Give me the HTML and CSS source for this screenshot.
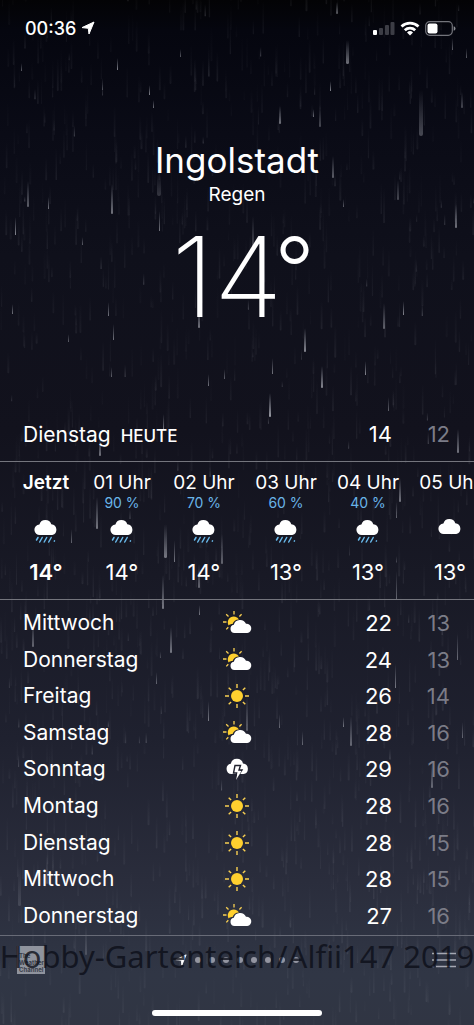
FILE: index.html
```html
<!DOCTYPE html>
<html lang="de">
<head>
<meta charset="utf-8">
<meta name="viewport" content="width=device-width, initial-scale=1">
<title>Wetter – Ingolstadt</title>
<link rel="stylesheet" href="styles.css">
</head>
<body>
<svg class="defs" aria-hidden="true">
  <symbol id="rain" viewBox="0 0 24 26">
    <path fill="#fff" d="M6 17a5.300 5.300 0 0 1-.6-10.600A6.300 6.300 0 0 1 17.300 6.200A5.500 5.500 0 0 1 18.300 17Z"/>
    <path stroke="#69b9ea" stroke-width="1.500" stroke-linecap="round" fill="none" d="M4 19.500l-1.500 2.500M8.200 19.500l-2.500 4.500M12.700 19.500l-2.500 4.500M17.200 19.500l-2.500 4.500M20.500 22.800l-.2.300"/>
  </symbol>
  <symbol id="cloud" viewBox="0 0 24 26">
    <path fill="#fff" d="M6 16a5.300 5.300 0 0 1-.6-10.600A6.300 6.300 0 0 1 17.300 5.200A5.500 5.500 0 0 1 18.300 16Z"/>
  </symbol>
  <symbol id="sun" viewBox="0 0 30 26">
    <circle cx="15" cy="13" r="6" fill="#ffd02f"/>
    <path stroke="#f8cf52" stroke-width="1.400" d="M15 1v4M15 21v4M3 13h4M23 13h4M6.700 4.700l2.400 2.400M20.900 18.900l2.400 2.400M23.300 4.700l-2.400 2.400M9.100 18.900l-2.400 2.400"/>
  </symbol>
  <symbol id="partly" viewBox="0 0 30 26">
    <path fill="#ffd02f" d="M6.500 15.500A5.700 5.700 0 1 1 17 9.500C13.800 9.400 11.500 11.200 10.500 14C8.800 14 7.500 14.500 6.500 15.500Z"/>
    <path stroke="#f8cf52" stroke-width="1.300" d="M12 1v3.500M1 12h3.500M4.200 4.200l2.300 2.300M19.600 4.200l-2.200 2.300M6.300 17.200l-2 2.200"/>
    <path fill="#fff" d="M12.500 23a4.200 4.200 0 0 1-.7-8.300A6.500 6.500 0 0 1 24 13.800A4.600 4.600 0 0 1 25.300 23Z"/>
  </symbol>
  <symbol id="storm" viewBox="0 0 30 26">
    <path fill="#fff" d="M9.500 18a5.200 5.200 0 0 1-.7-10.300A6.300 6.300 0 0 1 21 7.500A5.300 5.300 0 0 1 21.500 18Z"/>
    <path fill="#fff" stroke="#20222f" stroke-width="1.400" d="M13 9.500h5.500l-1.500 4.500h3l-6.500 10l1.300-7h-3.300Z"/>
    <path fill="#fff" d="M16 15h3.500l-5.500 9Z"/>
  </symbol>
  <symbol id="arrow" viewBox="0 0 14 14">
    <path fill="#fff" stroke="#fff" stroke-linejoin="round" d="M13 1L8 13L7.300 7.300L1 6.600Z"/>
  </symbol>
</svg>

<main class="app">
  <svg class="rainfall" id="rainfall" viewBox="0 0 474 1025" preserveAspectRatio="xMidYMid slice" aria-hidden="true">
    <defs>
      <linearGradient id="streak" x1="0" y1="0" x2="0" y2="1">
        <stop offset="0" stop-color="#c8ccd8" stop-opacity="0"/>
        <stop offset="1" stop-color="#d8dae2"/>
      </linearGradient>
    </defs>
  </svg>

  <header class="status">
    <div class="status-left">
      <time>00:36</time>
      <svg class="locate" role="img" aria-label="Ortung aktiv"><use href="#arrow"/></svg>
    </div>
    <div class="status-right">
      <svg class="signal" viewBox="0 0 22 14" role="img" aria-label="Mobilfunk">
        <rect x="0" y="9" width="4" height="5" rx="1" fill="#fff"/>
        <g fill="#3c3d45"><rect x="6" y="7" width="4" height="7" rx="1"/><rect x="12" y="4" width="4" height="10" rx="1"/><rect x="17.500" y="1" width="4" height="13" rx="1"/></g>
      </svg>
      <svg class="wifi" viewBox="0 0 20 15" role="img" aria-label="WLAN">
        <path fill="none" stroke="#fff" stroke-width="2.800" d="M1.500 5.500A12.500 12.500 0 0 1 18.500 5.500M4.800 9.200A7.600 7.600 0 0 1 15.200 9.200"/>
        <path fill="#fff" d="M10 14.500L7 11.400A4.300 4.300 0 0 1 13 11.400Z"/>
      </svg>
      <svg class="battery" viewBox="0 0 31 15" role="img" aria-label="Batterie">
        <rect x=".7" y=".7" width="26.600" height="13.600" rx="4" fill="none" stroke="#73747b" stroke-width="1.200"/>
        <rect x="2.500" y="2.500" width="10" height="10" rx="2" fill="#fff"/>
        <path fill="#8b8c92" d="M28.700 5.300q1.800.5 1.800 2.200t-1.800 2.200Z"/>
      </svg>
    </div>
  </header>

  <section class="current">
    <h1 class="city">Ingolstadt</h1>
    <p class="condition">Regen</p>
    <p class="temperature">14<span class="ring">°</span></p>
  </section>

  <section class="today">
    <h2 class="day">Dienstag</h2>
    <span class="label">HEUTE</span>
    <span class="high">14</span>
    <span class="low">12</span>
  </section>

  <ul class="hours">
    <li class="hour now"><span class="clock">Jetzt</span><span class="chance"></span><svg class="hour-icon"><use href="#rain"/></svg><span class="degrees">14°</span></li>
    <li class="hour"><span class="clock">01 Uhr</span><span class="chance">90 %</span><svg class="hour-icon"><use href="#rain"/></svg><span class="degrees">14°</span></li>
    <li class="hour"><span class="clock">02 Uhr</span><span class="chance">70 %</span><svg class="hour-icon"><use href="#rain"/></svg><span class="degrees">14°</span></li>
    <li class="hour"><span class="clock">03 Uhr</span><span class="chance">60 %</span><svg class="hour-icon"><use href="#rain"/></svg><span class="degrees">13°</span></li>
    <li class="hour"><span class="clock">04 Uhr</span><span class="chance">40 %</span><svg class="hour-icon"><use href="#rain"/></svg><span class="degrees">13°</span></li>
    <li class="hour"><span class="clock">05 Uhr</span><span class="chance"></span><svg class="hour-icon"><use href="#cloud"/></svg><span class="degrees">13°</span></li>
  </ul>

  <ul class="days">
    <li class="row"><span class="day">Mittwoch</span><svg class="day-icon"><use href="#partly"/></svg><div class="range"><span class="high">22</span><span class="low">13</span></div></li>
    <li class="row"><span class="day">Donnerstag</span><svg class="day-icon"><use href="#partly"/></svg><div class="range"><span class="high">24</span><span class="low">13</span></div></li>
    <li class="row"><span class="day">Freitag</span><svg class="day-icon"><use href="#sun"/></svg><div class="range"><span class="high">26</span><span class="low">14</span></div></li>
    <li class="row"><span class="day">Samstag</span><svg class="day-icon"><use href="#partly"/></svg><div class="range"><span class="high">28</span><span class="low">16</span></div></li>
    <li class="row"><span class="day">Sonntag</span><svg class="day-icon"><use href="#storm"/></svg><div class="range"><span class="high">29</span><span class="low">16</span></div></li>
    <li class="row"><span class="day">Montag</span><svg class="day-icon"><use href="#sun"/></svg><div class="range"><span class="high">28</span><span class="low">16</span></div></li>
    <li class="row"><span class="day">Dienstag</span><svg class="day-icon"><use href="#sun"/></svg><div class="range"><span class="high">28</span><span class="low">15</span></div></li>
    <li class="row"><span class="day">Mittwoch</span><svg class="day-icon"><use href="#sun"/></svg><div class="range"><span class="high">28</span><span class="low">15</span></div></li>
    <li class="row"><span class="day">Donnerstag</span><svg class="day-icon"><use href="#partly"/></svg><div class="range"><span class="high">27</span><span class="low">16</span></div></li>
  </ul>

  <footer class="footer">
    <div class="toolbar">
      <a class="channel" href="#">The<br>Weather<br>Channel</a>
      <div class="pages">
        <svg class="page-arrow"><use href="#arrow"/></svg>
        <i class="dot"></i><i class="dot"></i><i class="dot"></i><i class="dot"></i><i class="dot"></i><i class="dot"></i><i class="dot"></i><i class="dot"></i>
      </div>
      <button class="menu" type="button" aria-label="Liste">
        <svg class="menu-icon" viewBox="0 0 24 16"><path stroke="#a5a7b2" stroke-width="1.300" d="M0 1.500h2M4 1.500h20M0 8h2M4 8h20M0 14.500h2M4 14.500h20"/></svg>
      </button>
      <p class="watermark">Hobby-Gartenteich/Alfii147 2019</p>
    </div>
    <div class="home"></div>
  </footer>
</main>
<script src="rain.js"></script>
</body>
</html>
```

FILE: styles.css
```css
* {
  box-sizing: border-box;
}

body {
  margin: 0;
  background: #05060c;
  color: #fff;
  font-family: Inter, "Liberation Sans", sans-serif;
}

h1, h2, p, ul {
  margin: 0;
  padding: 0;
  font-weight: 400;
  list-style: none;
}

.defs {
  display: none;
}

.app {
  position: relative;
  display: flex;
  flex-direction: column;
  min-height: 100vh;
  overflow: hidden;
  background: linear-gradient(#030305 0, #05060f 3%, #0a0b16 13%, #0f101b 25%, #12121d 42%, #181925 56%, #1f212f 72%, #2a2d3c 86%, #303645 95%, #303543 100%);
}

.app > * {
  position: relative;
}

.app > .rainfall {
  position: absolute;
  inset: 0;
  width: 100%;
  height: 100%;
}

.status {
  display: flex;
  justify-content: space-between;
  align-items: center;
  height: 56px;
  padding: 0 18px 0 25px;
}

.status-left,
.status-right {
  display: flex;
  align-items: center;
  gap: 5px;
}

.status-left {
  font-size: 18px;
  font-weight: 500;
}

.locate {
  width: 14px;
  height: 14px;
}

.signal {
  width: 22px;
  height: 14px;
}

.wifi {
  width: 20px;
  height: 15px;
}

.battery {
  width: 31px;
  height: 15px;
}

.current {
  display: flex;
  flex-direction: column;
  align-items: center;
  padding-top: 82px;
  height: 352px;
}

.city {
  font-size: 35px;
  line-height: 44px;
}

.condition {
  font-size: 19px;
  line-height: 26px;
}

.temperature {
  padding-left: 12px;
  font-size: 112px;
  font-weight: 250;
  line-height: 136px;
}

.ring {
  margin-left: -8px;
  font-size: 88px;
  font-weight: 300;
  line-height: 1;
  vertical-align: 16px;
}

.today {
  display: flex;
  align-items: baseline;
  height: 54px;
  padding: 12px 24px 0 23px;
  border-bottom: 1px solid #74757d;
  font-size: 22px;
  line-height: 28px;
}

.day {
  font-size: 21px;
}

.label {
  margin: 0 auto 0 10px;
  font-size: 17px;
  font-weight: 500;
}

.high,
.low {
  width: 58px;
  text-align: right;
}

.low {
  color: #7b7c87;
}

.hours {
  display: flex;
  gap: 24px;
  height: 138px;
  padding: 8px 23px 0;
  border-bottom: 1px solid #74757d;
  overflow: hidden;
}

.hour {
  display: flex;
  flex: 0 0 58px;
  flex-direction: column;
  align-items: center;
  min-width: 0;
  white-space: nowrap;
}

.now {
  flex-basis: 46px;
  font-weight: 600;
}

.clock {
  font-size: 19px;
  line-height: 26px;
}

.chance {
  height: 14px;
  color: #69b4e8;
  font-size: 14px;
  line-height: 14px;
}

.hour-icon {
  width: 24px;
  height: 26px;
  margin: 8px 0 14px;
}

.degrees {
  font-size: 22px;
  line-height: 28px;
}

.days {
  display: grid;
  flex: 1;
  grid-auto-rows: 1fr;
  padding: 5px 0 1px;
  font-size: 22px;
  line-height: 28px;
}

.row {
  display: grid;
  grid-template-columns: 1fr 30px 1fr;
  align-items: center;
  padding: 0 24px 0 23px;
}

.range {
  display: flex;
  justify-content: flex-end;
}

.day-icon {
  width: 30px;
  height: 26px;
}

.footer {
  display: flex;
  flex-direction: column;
  align-items: center;
  justify-content: space-between;
  height: 90px;
  padding-bottom: 9px;
  border-top: 1px solid #686b77;
}

.toolbar {
  position: relative;
  display: grid;
  grid-template-columns: 1fr auto 1fr;
  align-items: center;
  width: 100%;
  height: 48px;
  padding: 0 18px 0 17px;
}

.channel {
  width: 28px;
  height: 28px;
  padding: 6px 0 0 2px;
  background: #8f939d;
  color: #3a3e4a;
  font-size: 6px;
  font-weight: 700;
  line-height: 7px;
  text-decoration: none;
}

.pages {
  display: flex;
  align-items: center;
  gap: 8px;
}

.page-arrow {
  width: 12px;
  height: 12px;
}

.dot {
  width: 6px;
  height: 6px;
  border-radius: 50%;
  background: #9395a1;
}

.menu {
  justify-self: end;
  padding: 0;
  border: 0;
  background: none;
}

.menu-icon {
  display: block;
  width: 24px;
  height: 16px;
}

.watermark {
  position: absolute;
  top: 0;
  left: 50%;
  transform: translateX(-50%);
  color: rgba(12, 14, 24, .8);
  font-family: "Noto Sans", "Open Sans", sans-serif;
  font-size: 31px;
  line-height: 40px;
  white-space: nowrap;
  pointer-events: none;
}

.home {
  width: 170px;
  height: 6px;
  border-radius: 3px;
  background: #fff;
}
```

FILE: rain.js
```js
const sky = document.getElementById("rainfall");

// Bright drops: x, bottom edge, length, width, opacity
const drops = [
  [346, 64, 24, 3, .5], [336, 14, 12, 2, .4], [330, 91, 10, 1, .6], [279, 124, 18, 2, .5],
  [319, 127, 22, 2, .3], [419, 136, 46, 4, .3], [461, 108, 16, 2, .3], [117, 70, 12, 1, .6],
  [149, 95, 10, 1, .6], [153, 108, 8, 1, .5], [21, 71, 8, 1, .4], [180, 57, 8, 1, .4],
  [102, 90, 12, 1, .3], [452, 50, 12, 1, .4], [466, 58, 10, 1, .4], [313, 117, 8, 1, .5],
  [27, 207, 26, 2, .4], [48, 209, 12, 1, .5], [111, 214, 30, 2, .5], [157, 196, 22, 4, .2],
  [15, 235, 18, 1, .6], [159, 231, 20, 1, .5], [82, 245, 8, 1, .4], [332, 178, 22, 2, .4],
  [397, 200, 20, 2, .3], [455, 228, 24, 2, .5], [252, 250, 34, 2, .3], [343, 207, 8, 1, .4],
  [198, 328, 20, 2, .5], [108, 316, 14, 1, .5], [12, 314, 10, 1, .5], [113, 340, 16, 1, .5],
  [304, 352, 24, 2, .6], [383, 329, 26, 2, .4], [403, 315, 14, 1, .6], [68, 342, 8, 1, .4],
  [321, 388, 22, 2, .6], [365, 375, 14, 1, .6], [269, 417, 24, 2, .7], [272, 374, 16, 1, .5],
  [208, 386, 12, 1, .5], [224, 379, 10, 1, .4], [388, 411, 14, 1, .4], [111, 377, 10, 1, .4],
  [99, 456, 18, 2, .5], [457, 453, 24, 2, .5], [163, 430, 16, 1, .5], [96, 529, 32, 2, .5],
  [164, 558, 34, 3, .5], [174, 562, 22, 1, .5], [221, 564, 30, 2, .4], [198, 588, 24, 2, .4],
  [71, 543, 14, 1, .4], [399, 502, 24, 2, .5], [396, 518, 16, 1, .4], [162, 609, 34, 2, .5],
  [396, 599, 28, 1, .4], [170, 653, 26, 2, .5], [32, 647, 24, 2, .4], [199, 615, 10, 1, .5],
  [156, 684, 12, 1, .4], [208, 721, 20, 1, .5], [246, 731, 34, 2, .3], [350, 746, 30, 2, .4],
  [279, 728, 14, 1, .4], [343, 727, 10, 1, .5], [395, 688, 24, 1, .5], [457, 660, 26, 1, .4],
  [302, 745, 14, 1, .4], [462, 738, 16, 1, .4], [431, 788, 24, 2, .4],
  [46, 884, 30, 2, .2], [18, 906, 40, 3, .15], [85, 955, 30, 2, .2]
];

function drop(x, bottom, length, width, opacity) {
  const r = document.createElementNS("http://www.w3.org/2000/svg", "rect");
  const attrs = { x, y: bottom - length, width, height: length, rx: width / 2, fill: "url(#streak)", opacity };
  for (const name in attrs) r.setAttribute(name, attrs[name]);
  sky.appendChild(r);
}

let seed = 7;
function random() {
  seed = (seed * 16807) % 2147483647;
  return seed / 2147483647;
}

for (let i = 0; i < 1700; i++) {
  drop(random() * 474, random() * 1060, 10 + random() * 26, 1 + random(), 0.02 + random() * 0.06);
}
for (let i = 0; i < 60; i++) {
  drop(random() * 474, random() * 800, 5 + random() * 8, 1, 0.1 + random() * 0.2);
}
drops.forEach(d => drop(...d));
```
